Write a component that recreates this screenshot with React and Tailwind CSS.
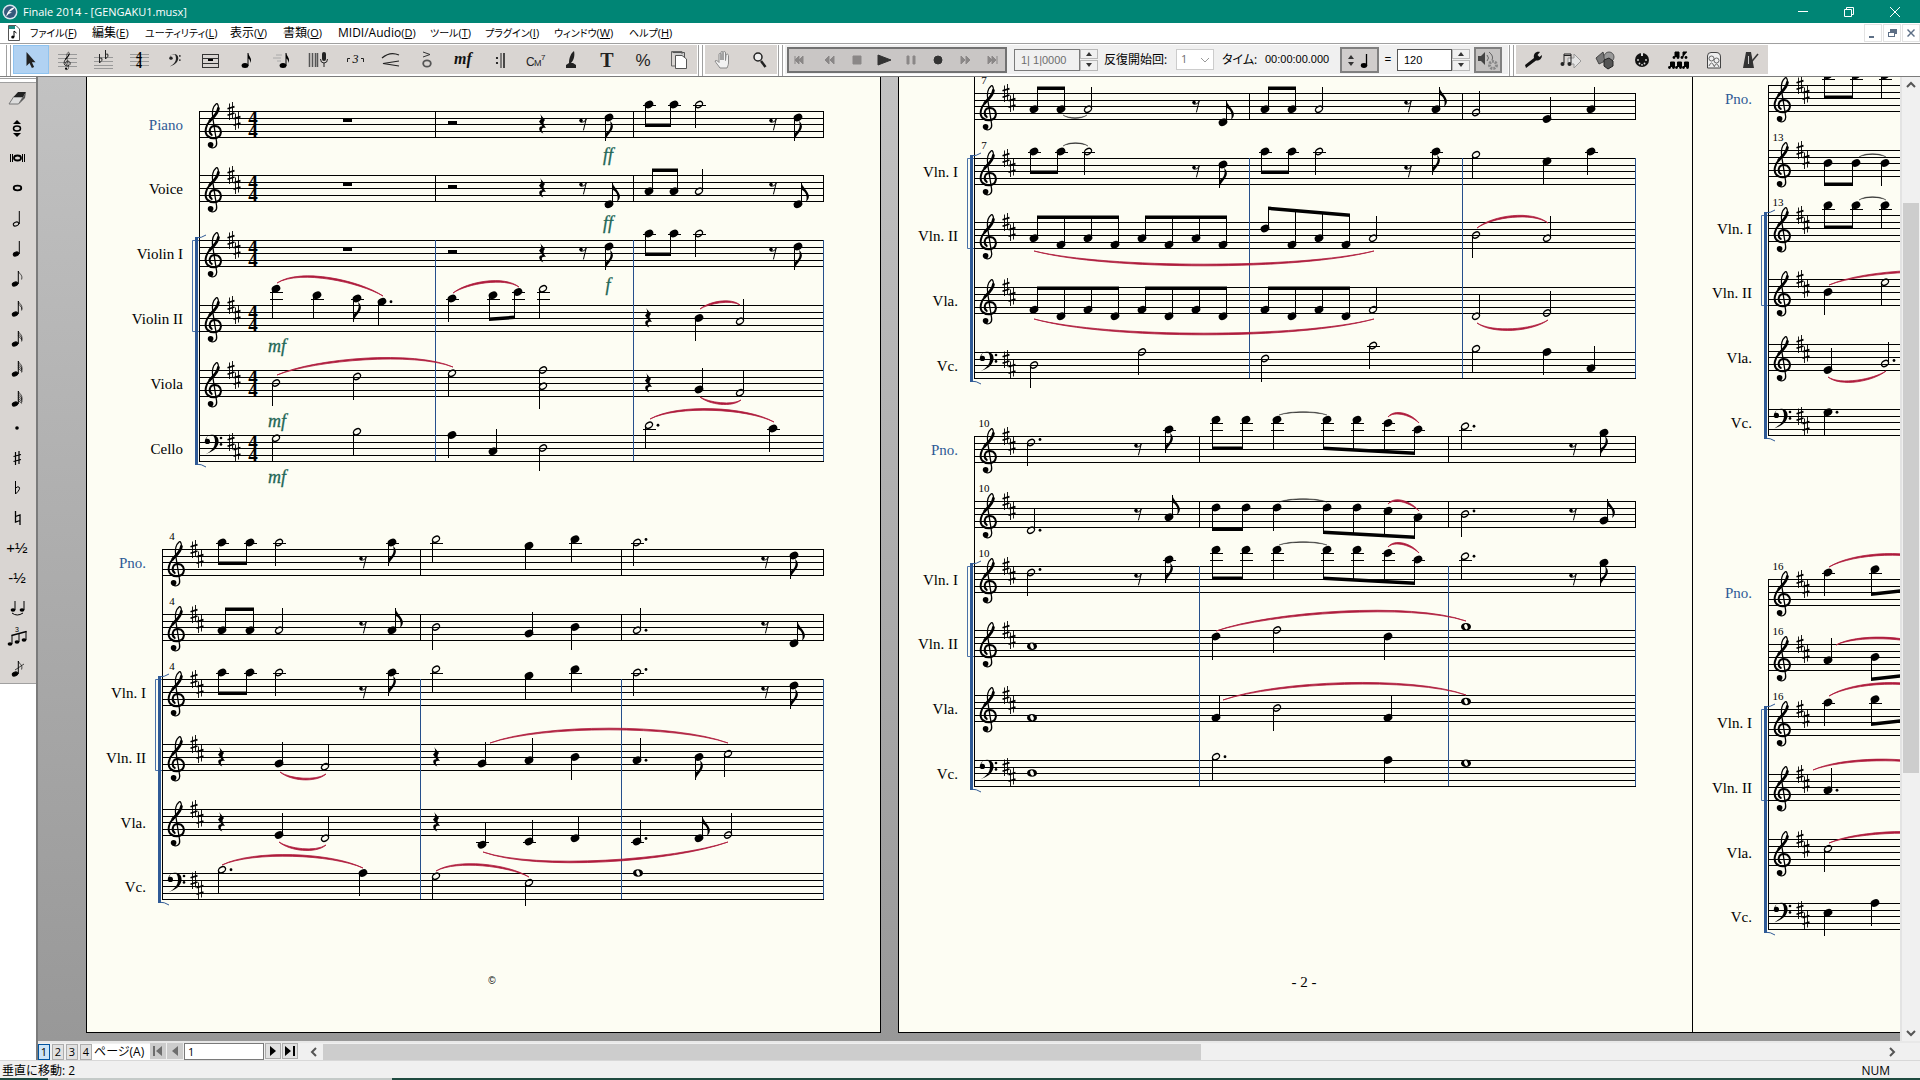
import React, { useState } from 'react';

const STAFF_LINES = [0, 7, 13, 20, 26];
const STEP = 3.25;

/* ---------- music symbols ---------- */

const TrebleClef = ({ x, y, s = 1 }) => (
  <g transform={`translate(${x} ${y}) scale(${s})`} fill="none" stroke="black" strokeLinecap="round">
    <path d="M-1.2 4C-5 1.4 -3.4 -5 1.5 -5C7.2 -5 9 0 7.3 3.8C5.2 8.2 -2.4 8.2 -5.6 4.8C-9.2 0.6 -6.8 -6.2 -2.6 -10.6" strokeWidth="2" />
    <path d="M-3.2 -10C1 -14.4 5 -18 5.4 -22.6" strokeWidth="2.8" />
    <path d="M5.4 -22C5.8 -26 4.2 -28.4 2.8 -26.8C-0.6 -24 -1 -18 -0.2 -13L3.6 11C4.4 16.2 0 18 -3 16" strokeWidth="1.3" />
    <circle cx="-2.4" cy="13.8" r="2.8" fill="black" stroke="none" />
  </g>
);

const BassClef = ({ x, y, s = 1 }) => (
  <g transform={`translate(${x} ${y}) scale(${s})`}>
    <circle cx="-4.6" cy="6.4" r="2.6" />
    <path d="M-6.8 6C-6.4 -2 6.8 -2.6 6.6 6.6C6.2 13.6 0 17 -6.6 19.4C-1 16 3 12.6 3 6.4C3 1 0.4 -0.6 -2 0C-4.4 0.6 -5.6 2.6 -5.8 5Z" />
    <circle cx="9" cy="3" r="1.3" />
    <circle cx="9" cy="9.4" r="1.3" />
  </g>
);

const Sharp = ({ x, y }) => (
  <g transform={`translate(${x} ${y})`} stroke="black" fill="none">
    <path d="M-1.5 -7.5V9M1.5 -9V7.5" strokeWidth="0.9" />
    <path d="M-3.5 -2.2L3.5 -4.4M-3.5 4.2L3.5 2" strokeWidth="1.7" />
  </g>
);

const Head = ({ x, y, type }) => {
  if (type === 'w') {
    return (
      <g transform={`translate(${x} ${y})`}>
        <ellipse rx="5" ry="3.8" />
        <ellipse rx="1.7" ry="2.7" fill="#fdfdf3" transform="rotate(-20)" />
      </g>
    );
  }
  if (type === 'h') {
    return <ellipse rx="3.8" ry="2.7" fill="none" stroke="black" strokeWidth="1.4" transform={`translate(${x} ${y}) rotate(-30)`} />;
  }
  return <ellipse rx="4.5" ry="3.5" transform={`translate(${x} ${y}) rotate(-25)`} />;
};

const Flag = ({ x, y, up }) => (
  <path d="M0 0C0.5 5 7.4 9 7.4 14C7.4 16.4 6 18.4 4.5 19.4C6.4 14 4 9 0 7.5Z" transform={`translate(${x} ${y}) scale(1 ${up ? 1 : -1})`} />
);

const QuarterRest = ({ x, y }) => (
  <path d="M-2 -10L3 -4C1 -2 1 0 4 4C0 2.8 -1.6 5 1.4 9.6C-4 7.4 -4 1.4 0.4 2.2L-3 -2.6C-0.4 -5 -0.2 -7 -2 -10Z" transform={`translate(${x} ${y})`} />
);

const EighthRest = ({ x, y }) => (
  <g transform={`translate(${x} ${y})`}>
    <circle cx="-2" cy="-3.4" r="1.8" />
    <path d="M-2.4 -2C0 -1.4 2 -2.4 3.2 -5L0.4 6.4" fill="none" stroke="black" />
  </g>
);

const Ledgers = ({ x, top, pos }) => {
  const lines = [];
  for (let p = -2; p >= pos; p -= 2) lines.push(p);
  for (let p = 10; p <= pos; p += 2) lines.push(p);
  return lines.map((p) => (
    <rect key={p} x={x - 6} y={Math.round(top + p * STEP)} width="13" height="1" />
  ));
};

const Note = ({ top, type, x, pos, dir, dot }) => {
  const y = top + pos * STEP;
  const up = dir === 'u';
  const stemX = up ? x + 3 : x - 4;
  const end = up ? Math.min(y - 22, top + 13) : Math.max(y + 23, top + 13);
  return (
    <g>
      <Ledgers x={x} top={top} pos={pos} />
      <Head x={x} y={y} type={type} />
      {dir && <rect x={stemX} y={Math.round(Math.min(y, end))} width="1" height={Math.round(Math.abs(end - y))} />}
      {type === 'e' && <Flag x={stemX + 0.5} y={end} up={up} />}
      {dot && <circle cx={x + 9} cy={pos % 2 === 0 ? y - 3 : y} r="1.4" />}
    </g>
  );
};

const Beam = ({ top, token }) => {
  const [dir, ys, heads] = token.slice(1).split('|');
  const [b1, b2] = ys.split(',').map(Number);
  const notes = heads.split(',').map((n) => n.split(':').map(Number));
  const off = dir === 'u' ? 3 : -4;
  const xa = notes[0][0] + off;
  const xb = notes[notes.length - 1][0] + off;
  const beamY = (x) => top + b1 + ((b2 - b1) * (x - xa)) / (xb - xa);
  return (
    <g>
      {notes.map(([x, pos]) => {
        const y = top + pos * STEP;
        const by = beamY(x + off);
        return (
          <g key={x}>
            <Ledgers x={x} top={top} pos={pos} />
            <Head x={x} y={y} />
            <rect x={x + off} y={Math.min(y, by)} width="1" height={Math.abs(by - y)} />
          </g>
        );
      })}
      <polygon points={`${xa},${beamY(xa) - 1.5} ${xb + 1},${beamY(xb) - 1.5} ${xb + 1},${beamY(xb) + 2} ${xa},${beamY(xa) + 2}`} />
    </g>
  );
};

const Token = ({ top, token }) => {
  if (token[0] === 'b') return <Beam top={top} token={token} />;
  const rest = token.match(/^([WHRE])(\d+)$/);
  if (rest) {
    const x = Number(rest[2]);
    if (rest[1] === 'W') return <rect x={x - 4} y={top + 7} width="9" height="4" />;
    if (rest[1] === 'H') return <rect x={x - 4} y={top + 10} width="9" height="4" />;
    if (rest[1] === 'R') return <QuarterRest x={x} y={top + 13} />;
    return <EighthRest x={x} y={top + 13} />;
  }
  const [, type, x, pos, dir, dot] = token.match(/^([whqe])(\d+):(-?\d+)([ud]?)(\.?)$/);
  return <Note top={top} type={type} x={Number(x)} pos={Number(pos)} dir={dir} dot={dot} />;
};

const Slur = ({ d: [x1, y1, x2, y2, h, tie] }) => {
  const k = (h * 4) / 3;
  const t = tie ? 0.5 : 1.1;
  const s = h < 0 ? -1 : 1;
  const xa = x1 + (x2 - x1) * 0.22;
  const xb = x2 - (x2 - x1) * 0.22;
  return (
    <path
      d={`M${x1} ${y1}C${xa} ${y1 + k + s * t} ${xb} ${y2 + k + s * t} ${x2} ${y2}C${xb} ${y2 + k - s * t} ${xa} ${y1 + k - s * t} ${x1} ${y1}Z`}
      fill={tie ? '#222' : '#ae1c3c'}
      stroke={tie ? '#222' : '#ae1c3c'}
      strokeWidth={tie ? '0.4' : '0.8'}
    />
  );
};

const System = ({ left, right, bars, staves, slurs, first, number, clipTop }) => {
  const group = staves.filter((s) => s.bracket);
  const gTop = group[0].top;
  const gBottom = group[group.length - 1].top + 26;
  const thinBottom = group[1].top + 26;
  return (
    <g fill="black">
      {staves.map((s) => (
        <g key={s.top}>
          {STAFF_LINES.map((l) => (
            <rect key={l} x={left} y={s.top + l} width={right - left + 1} height="1" />
          ))}
          {s.bass ? <BassClef x={left + 13} y={s.top} /> : <TrebleClef x={left + 14} y={s.top + 20} />}
          <Sharp x={left + 32} y={s.top + (s.bass ? 7 : 0)} />
          <Sharp x={left + 38} y={s.top + (s.bass ? 17 : 10)} />
          {first && (
            <g fontFamily="Liberation Serif, serif" fontWeight="bold" fontSize="19" textAnchor="middle">
              <text x={left + 54} y={s.top + 13}>4</text>
              <text x={left + 54} y={s.top + 26}>4</text>
            </g>
          )}
          {number && s.num && (
            <text x={left + 10} y={s.top - 9} fontFamily="Liberation Serif, serif" fontSize="11" textAnchor="middle">{number}</text>
          )}
          {s.label && (
            <text x={left - 16} y={s.top + 19} fontFamily="Liberation Serif, serif" fontSize="15" textAnchor="end" fill={s.blue ? '#2f5a96' : 'black'}>
              {s.label}
            </text>
          )}
          {!s.bracket && [...bars, right].map((b) => <rect key={b} x={b} y={s.top} width="1" height="26" />)}
          {s.notes.split(' ').map((t) => <Token key={t} top={s.top} token={t} />)}
        </g>
      ))}
      <rect x={left} y={clipTop || staves[0].top} width="1" height={gBottom - (clipTop || staves[0].top) + 1} />
      {[...bars, right].map((b) => (
        <rect key={b} x={b} y={gTop} width="1" height={gBottom - gTop} fill="#26508c" />
      ))}
      <path d={`M${left} ${gTop + 0.5}H${left - 6.5}V${thinBottom + 0.5}H${left}`} fill="none" stroke="#4a72a8" />
      <rect x={left - 4} y={gTop - 3} width="3" height={gBottom - gTop + 7} fill="#2f5a96" />
      <path d={`M${left - 4} ${gTop - 2}Q${left + 3} ${gTop - 2} ${left + 7} ${gTop - 5}`} fill="none" stroke="#2f5a96" />
      <path d={`M${left - 4} ${gBottom + 3}Q${left + 3} ${gBottom + 3} ${left + 7} ${gBottom + 6}`} fill="none" stroke="#2f5a96" />
      {slurs.map((d) => <Slur key={d.join()} d={d} />)}
    </g>
  );
};

/* ---------- score data ----------
   q276:-5d  = quarter head at x 276, five steps over the top line, stem down
   W H R E   = whole, half, quarter and eighth rest
   bd|y1,y2| = beamed group, stems down, beam from y1 to y2 */

const P1A = 'W347 H452 R542 E583 e609:2d bd|14,14|649:-2,674:-2 h699:-2d E773 e798:2d';
const P1B = 'bd|14,14|222:-2,250:-2 h279:-2d E363 e392:-2d h436:-3d q529:-1d q575:-3d h637:-2d. E765 e794:2d';
const P2B = 'h1031:2d. E1138 e1169:-2d bd|12,12|1216:-5,1246:-5 q1277:-5d bd|12,17|1327:-5,1357:-5,1388:-4,1418:-2 h1465:-3d. E1573 e1604:-1d';
const P3A = 'bd|12,12|1828:-3,1856:-3 q1885:-3d';
const P3B = 'q1828:-2d bd|15,10|1875:-3,1920:-4';

const page1 = [
  {
    left: 199, right: 823, bars: [435, 633], first: true,
    staves: [
      { top: 111, label: 'Piano', blue: true, notes: P1A },
      { top: 175, label: 'Voice', notes: 'W347 H452 R542 E583 e609:9u bu|-5,-5|649:5,674:5 h699:5u E773 e798:9u' },
      { top: 240, label: 'Violin I', bracket: true, notes: P1A },
      { top: 305, label: 'Violin II', bracket: true, notes: 'q276:-5d q317:-3d e357:-2d q382:-1d. q452:-2d bd|14,12|493:-3,518:-4 h543:-5d R648 q699:4d h740:5u' },
      { top: 370, label: 'Viola', bracket: true, notes: 'h276:4d h357:2d h452:1d h543:0d h543:5d R648 q699:6u h740:7u' },
      { top: 435, label: 'Cello', bracket: true, bass: true, notes: 'h276:1d h357:-1d q452:0d q493:5u h543:4d h649:-3d. q773:-2d' },
    ],
    slurs: [[277, 283, 383, 296, -11], [453, 293, 519, 287, -8], [700, 309, 740, 305, -5], [277, 375, 453, 367, -12], [700, 397, 741, 400, 5], [650, 419, 774, 422, -11]],
  },
  {
    left: 162, right: 823, bars: [420, 621], number: 4,
    staves: [
      { top: 549, label: 'Pno.', blue: true, num: true, notes: P1B },
      { top: 614, num: true, notes: 'bu|-5,-5|222:5,250:5 h279:5u E363 e392:5u h436:4d q529:6u q575:4d h637:5u. E765 e794:9u' },
      { top: 679, label: 'Vln. I', num: true, bracket: true, notes: P1B },
      { top: 744, label: 'Vln. II', bracket: true, notes: 'R221 q279:6u h325:7u R436 q482:6u q529:5u q575:4d q637:5u. e699:4d h728:3d' },
      { top: 809, label: 'Vla.', bracket: true, notes: 'R221 q279:8u h325:9u R436 q482:11u q529:10u q575:9u q637:10u. e699:9u h728:8u' },
      { top: 873, label: 'Vc.', bracket: true, bass: true, notes: 'h222:-1d. q363:0d h436:1d h529:3d w638:0' },
    ],
    slurs: [[280, 772, 326, 774, 6], [490, 743, 728, 743, -14], [279, 842, 326, 845, 6], [483, 852, 728, 842, 14], [222, 865, 363, 868, -11], [436, 871, 529, 877, -9]],
  },
];

const VLN2 = 'bu|-5,-5|1034:5,1061:7,1088:5,1115:7 bu|-5,-5|1142:5,1169:7,1196:5,1223:7 bu|-14,-7|1265:2,1292:7,1319:5,1346:7 h1373:5u h1476:4d h1547:5u';
const VLA = 'bu|1,1|1034:7,1061:9,1088:7,1115:9 bu|1,1|1142:7,1169:9,1196:7,1223:9 bu|1,1|1265:7,1292:9,1319:7,1346:9 h1373:7u h1476:9u h1547:8u';

const page2 = [
  {
    left: 974, right: 1635, bars: [1249, 1462], number: 7, clipTop: 77,
    staves: [
      { top: 93, num: true, notes: 'bu|-5,-5|1034:5,1061:5 h1088:5u E1196 e1223:9u bu|-5,-5|1265:5,1292:5 h1319:5u E1408 e1436:5u h1476:6u q1547:8u q1591:5u' },
      { top: 158, label: 'Vln. I', num: true, bracket: true, notes: 'bd|14,14|1034:-2,1061:-2 h1088:-2d E1196 e1223:2d bd|14,14|1265:-2,1292:-2 h1319:-2d E1408 e1436:-2d h1476:-1d q1547:1d q1591:-2d' },
      { top: 222, label: 'Vln. II', bracket: true, notes: VLN2 },
      { top: 287, label: 'Vla.', bracket: true, notes: VLA },
      { top: 352, label: 'Vc.', bracket: true, bass: true, notes: 'h1034:4d h1142:0d h1265:2d h1373:-2d h1476:-1d q1547:0d q1591:5u' },
    ],
    slurs: [[1063, 115, 1087, 115, 3, 1], [1063, 146, 1088, 146, -3, 1], [1034, 251, 1374, 251, 14], [1477, 228, 1548, 223, -9], [1034, 319, 1374, 319, 15], [1477, 323, 1548, 320, 8]],
  },
  {
    left: 974, right: 1635, bars: [1199, 1448], number: 10,
    staves: [
      { top: 436, label: 'Pno.', blue: true, num: true, notes: P2B },
      { top: 501, num: true, notes: 'h1031:9u. E1138 e1169:5u bd|28,28|1216:2,1246:2 q1277:2d bd|31,36|1327:2,1357:2,1388:3,1418:5 h1465:4d. E1573 e1604:6u' },
      { top: 566, label: 'Vln. I', num: true, bracket: true, notes: P2B },
      { top: 630, label: 'Vln. II', bracket: true, notes: 'w1032:5 q1216:2d h1277:0d q1388:2d w1466:-1' },
      { top: 695, label: 'Vla.', bracket: true, notes: 'w1032:7 q1216:7u h1277:4d q1388:7u w1466:2' },
      { top: 760, label: 'Vc.', bracket: true, bass: true, notes: 'w1032:4 h1216:-1d. q1388:0d w1466:1' },
    ],
    slurs: [[1279, 415, 1327, 415, -3, 1], [1279, 502, 1327, 502, -3, 1], [1279, 545, 1327, 545, -3, 1], [1388, 417, 1419, 423, -6], [1388, 504, 1419, 511, -6], [1388, 547, 1419, 553, -6], [1216, 631, 1466, 621, -14], [1223, 700, 1466, 695, -14]],
  },
];

const page3 = [
  {
    left: 1768, right: 2480, bars: [1990], number: 13,
    staves: [
      { top: 85, label: 'Pno.', blue: true, notes: P3A },
      { top: 150, num: true, notes: 'bd|34,34|1828:4,1856:4 q1885:4d' },
      { top: 215, label: 'Vln. I', num: true, bracket: true, notes: P3A },
      { top: 279, label: 'Vln. II', bracket: true, notes: 'q1828:4d h1885:1d' },
      { top: 344, label: 'Vla.', bracket: true, notes: 'q1828:8u h1885:6u.' },
      { top: 409, label: 'Vc.', bracket: true, bass: true, notes: 'q1828:1d.' },
    ],
    slurs: [[1859, 157, 1886, 157, -3, 1], [1859, 200, 1886, 200, -3, 1], [1829, 285, 1990, 280, -11], [1828, 377, 1886, 371, 7]],
  },
  {
    left: 1768, right: 2480, bars: [1990], number: 16,
    staves: [
      { top: 579, label: 'Pno.', blue: true, num: true, notes: P3B },
      { top: 644, num: true, notes: 'q1828:5u bd|35,30|1875:4,1920:3' },
      { top: 709, label: 'Vln. I', num: true, bracket: true, notes: P3B },
      { top: 774, label: 'Vln. II', bracket: true, notes: 'q1828:5u.' },
      { top: 839, label: 'Vla.', bracket: true, notes: 'h1828:3d' },
      { top: 903, label: 'Vc.', bracket: true, bass: true, notes: 'q1828:3d q1875:0d' },
    ],
    slurs: [[1829, 567, 1940, 564, -11], [1836, 645, 1930, 647, -8], [1829, 696, 1940, 693, -11], [1813, 770, 1940, 768, -9], [1829, 843, 1960, 840, -9]],
  },
];

const dynamics = [['ff', 608, 161], ['ff', 608, 229], ['f', 608, 291], ['mf', 277, 352], ['mf', 277, 427], ['mf', 277, 483]];

/* ---------- small icons ---------- */

const Icon = ({ children, size = 'size-7', box = '0 0 28 28' }) => (
  <svg className={size} viewBox={box} fill="none" stroke="none">{children}</svg>
);
const grayLines = (ys) => ys.map((y) => <path key={y} d={`M5 ${y + 0.5}H24`} stroke="#999" />);

const MiniNote = ({ x = 14, flags = 0, half }) => (
  <g stroke="black">
    <ellipse cx={x - 3} cy="20" rx="2.8" ry="1.9" fill={half ? 'none' : 'black'} transform={`rotate(-20 ${x - 3} 20)`} />
    <path d={`M${x + 0.3} 20V7`} />
    {Array.from({ length: flags }, (_, i) => (
      <path key={i} d={`M${x + 0.3} ${7 + i * 2.2}C${x + 1} ${10 + i * 2.2} ${x + 5} ${10.5 + i * 2} ${x + 3.6} ${15.5 + i}`} fill="none" strokeWidth="0.7" />
    ))}
  </g>
);

const mainTools = [
  ['Selection', <path d="M9.500 6V20L12.500 17L14.900 22L17.100 21L14.900 16.200H18.500Z" fill="#222" />],
  ['Staff', <>{grayLines([8, 12, 16, 20])}<TrebleClef x={14} y={17} s={0.4} /></>],
  ['Key Signature', <>{grayLines([11, 15, 19, 22])}<path d="M10.500 8V17Q14 14 13 12.500Q11.500 11 10.500 13M16.500 4V13Q20 10 19 8.500Q17.500 7 16.500 9" stroke="#222" /></>],
  ['Time Signature', <>{grayLines([8, 11, 15, 19])}<g fill="black" fontFamily="Liberation Serif, serif" fontWeight="bold" fontSize="12" textAnchor="middle"><text x="14" y="14">4</text><text x="14" y="22">4</text></g></>],
  ['Clef', <g fill="#222"><BassClef x={13} y={8} s={0.65} /></g>],
  ['Measure', <><path d="M5 8.500H22M5 12.500H22M5 17.500H22M5 21.500H22M5.500 8V22M21.500 8V22" stroke="#333" /><rect x="11" y="13" width="5" height="2" fill="black" /></>],
  ['Simple Entry', <g fill="black"><ellipse cx="12" cy="19.500" rx="3.400" ry="2.500" /><path d="M14.500 20V7H15.500C15.500 11 20 12 17 17C17.500 14 16 13 15.500 12.500V20Z" /></g>],
  ['Speedy Entry', <g fill="black"><path d="M7 9H13M4 12H12M8 15H12" stroke="#aaa" /><ellipse cx="14" cy="19.500" rx="3.400" ry="2.500" /><path d="M16.500 20V7H17.500C17.500 11 22 12 19 17C19.500 14 18 13 17.500 12.500V20Z" /></g>],
  ['HyperScribe', <><path d="M4.500 7V21M7.500 7V21M10.500 7V21M12.500 7V21" stroke="#555" strokeWidth="1.500" /><rect x="17" y="6" width="4" height="9" rx="2" fill="#222" /><path d="M15.500 13Q15.500 17 19 17Q22.500 17 22.500 13M19 17V21" stroke="#222" /></>],
  ['Tuplet', <><path d="M6.500 16V12.500H9M22.500 16V12.500H20" stroke="#222" /><text x="14.500" y="17" fill="black" fontFamily="Liberation Serif, serif" fontStyle="italic" fontSize="12" textAnchor="middle">3</text></>],
  ['Smart Shape', <path d="M5 12Q13 5 22 9M22 15L6 17.500L22 20" stroke="#222" strokeWidth="1.200" />],
  ['Articulation', <><path d="M10 6L17 8.500L10 11" stroke="#333" /><ellipse cx="14" cy="17.500" rx="3.800" ry="3.200" stroke="#555" strokeWidth="1.800" /></>],
  ['Expression', <text x="14" y="18" fill="#111" fontFamily="Liberation Serif, serif" fontWeight="bold" fontStyle="italic" fontSize="16" textAnchor="middle">mf</text>],
  ['Repeat', <><path d="M16 7V22" stroke="#222" /><path d="M19 7V22" stroke="#222" strokeWidth="1.600" /><circle cx="12" cy="12" r="1.100" fill="black" /><circle cx="12" cy="17" r="1.100" fill="black" /></>],
  ['Chord', <g fill="#222" fontFamily="Liberation Sans, sans-serif"><text x="5" y="20" fontSize="12">C</text><text x="13" y="20" fontSize="9">M</text><text x="20" y="14" fontSize="8">7</text></g>],
  ['Lyrics', <path d="M9 22H19V19L16 17H12L9 19ZM12 17C12 12 14 7 17 5C18 9 17 14 14 17Z" fill="#222" />],
  ['Text', <text x="14" y="21" fill="#222" fontFamily="Liberation Serif, serif" fontWeight="bold" fontSize="20" textAnchor="middle">T</text>],
  ['Resize', <text x="14" y="20" fill="#222" fontFamily="Liberation Sans, sans-serif" fontSize="17" textAnchor="middle">%</text>],
  ['Page Layout', <><path d="M7.500 6.500H19.500V18.500" fill="#ccc" stroke="#555" /><path d="M10.500 9.500H17L21.500 13V22.500H10.500Z" fill="white" stroke="#555" /><path d="M6.500 5.500H17V8M6.500 5.500V20H10" stroke="#666" /></>],
];

const navTools = [
  ['Hand Grabber', <path d="M11 22C9 19 7 17 6 15C7 14 8.500 14.500 10 16.500V8.500C10 7 12 7 12 8.500V14V6.500C12 5 14 5 14 6.500V14V6.500C14.500 5 16.500 5 16.500 7V14.500L17 9C17.500 7.500 19.500 8 19.500 9.500V17C19.500 19 18.500 20.500 18 22Z" fill="#f2f2f2" stroke="#888" />],
  ['Zoom', <><circle cx="13" cy="11" r="4" fill="#eee" stroke="#222" strokeWidth="1.500" /><path d="M16 15L20.500 21" stroke="#222" strokeWidth="2.500" /></>],
];

const advTools = [
  ['Special Tools', <path d="M6 22L5 19L14 12C13 8 16 5 20 6L17.500 9L19.500 11L22 9C22 13 19 15 16 14.500Z" fill="#111" />],
  ['Note Mover', <><path d="M12 12H18V8L25 15L18 22V18H12Z" fill="#e4e4e4" stroke="#999" /><path d="M8 17V8H15V17M8 9.500H15" stroke="#222" /><circle cx="6.500" cy="18" r="2" fill="#222" /><circle cx="13.500" cy="18" r="2" fill="#222" /></>],
  ['Graphics', <><path d="M4 12L11 6L13 15L7 18Z" fill="#777" stroke="#444" /><circle cx="17" cy="11" r="5" fill="#999" stroke="#555" /><path d="M12 14L17 12L21 15V20L16 23L12 20Z" fill="#555" stroke="#222" /></>],
  ['MIDI', <><circle cx="14" cy="14" r="7" fill="#111" /><g fill="#ddd"><circle cx="10" cy="14" r="0.900" /><circle cx="18" cy="14" r="0.900" /><circle cx="11.500" cy="17.500" r="0.900" /><circle cx="16.500" cy="17.500" r="0.900" /><circle cx="14" cy="18.800" r="0.900" /><rect x="13" y="7" width="2" height="3" /></g></>],
  ['Ossia', <g fill="black"><path d="M11 11V6H15V11M19 11V6H23M6.500 21V16H10.500V21M13.500 21V16H17.500V21M20.500 21V16H24.500V21" stroke="black" /><circle cx="10" cy="11.500" r="1.400" /><circle cx="14" cy="11.500" r="1.400" /><circle cx="18" cy="11.500" r="1.400" /><circle cx="22" cy="11.500" r="1.400" /><circle cx="5.500" cy="21.500" r="1.400" /><circle cx="9.500" cy="21.500" r="1.400" /><circle cx="12.500" cy="21.500" r="1.400" /><circle cx="16.500" cy="21.500" r="1.400" /><circle cx="19.500" cy="21.500" r="1.400" /><circle cx="23.500" cy="21.500" r="1.400" /></g>],
  ['Mirror', <><path d="M7.500 22V10Q7.500 6.500 11 6.500H16Q20.500 6.500 20.500 11V22Z" fill="#eee" stroke="#444" /><circle cx="11.500" cy="12.500" r="2.500" stroke="#666" /><circle cx="16.500" cy="14.500" r="2.500" stroke="#666" /><path d="M9 20Q11.500 14 14 20M14 21Q16.500 15 19 21" stroke="#666" /></>],
  ['Tempo', <><path d="M10 6H15L18 22H7Z" fill="#333" /><path d="M12 20L22 8" stroke="#333" strokeWidth="1.500" /><path d="M12.500 10V18" stroke="#ccc" /></>],
];

const Quarter = ({ x, y }) => (
  <g><ellipse cx={x} cy={y} rx="2.4" ry="1.8" fill="black" /><path d={`M${x + 2} ${y}V${y - 9}`} stroke="black" /></g>
);

const sideTools = [
  ['Eraser', <><path d="M6 20L10.500 13H20L15.500 20Z" fill="#ddd" stroke="#777" /><path d="M10.500 13L15 8H23L20 13Z" fill="#222" /><path d="M20 13L23 8L22 14L16 20Z" fill="#555" /></>],
  ['Repitch', <g fill="black"><path d="M10 10L14 6L18 10ZM10 19L14 23L18 19Z" /><ellipse cx="14" cy="14.500" rx="3.500" ry="2.500" stroke="black" strokeWidth="1.500" fill="none" /></g>],
  ['Double Whole Note', <><path d="M7.500 10V18M9.500 10V18M19.500 10V18M21.500 10V18" stroke="black" /><ellipse cx="14.500" cy="14" rx="3.500" ry="2.500" stroke="black" strokeWidth="1.800" /></>],
  ['Whole Note', <ellipse cx="14.500" cy="14" rx="3.800" ry="2.300" stroke="black" strokeWidth="1.800" />],
  ['Half Note', <MiniNote x={16} half />],
  ['Quarter Note', <MiniNote x={16} />],
  ['Eighth Note', <MiniNote x={15} flags={1} />],
  ['16th Note', <MiniNote x={15} flags={2} />],
  ['32nd Note', <MiniNote x={15} flags={3} />],
  ['64th Note', <MiniNote x={15} flags={4} />],
  ['128th Note', <MiniNote x={15} flags={5} />],
  ['Dot', <circle cx="14" cy="14" r="1.800" fill="black" />],
  ['Sharp', <path d="M12.500 8V21M16 7V20M10.500 12.500L18 10.500M10.500 17.500L18 15.500" stroke="black" strokeWidth="1.200" />],
  ['Flat', <path d="M12.500 7V20Q18 15 16 13Q14 12 12.500 14.500" stroke="black" />],
  ['Natural', <path d="M12.500 7V18L17 16.500M17 21V11L12.500 12.500" stroke="black" strokeWidth="1.300" />],
  ['Half Step Up', '+½'],
  ['Half Step Down', '-½'],
  ['Tie', <><Quarter x={10} y={16} /><Quarter x={19} y={16} /><path d="M9 19Q14 23 20 19" stroke="black" /></>],
  ['Tuplet Entry', <><Quarter x={7} y={20} /><Quarter x={14} y={18} /><Quarter x={21} y={16} /><path d="M8.500 11.500L23.500 7.500" stroke="black" strokeWidth="1.600" /><text x="12" y="8" fontFamily="Liberation Sans, sans-serif" fontSize="7" fill="black">3</text></>],
  ['Grace Note', <><MiniNote x={15} flags={1} /><path d="M12 16L21 10" stroke="black" strokeWidth="0.700" /></>],
];

const menus = [
  ['ファイル', 'F', 'w-[62px]'], ['編集', 'E', 'w-[53px]'], ['ユーティリティ', 'L', 'w-[85px]'], ['表示', 'V', 'w-[53px]'], ['書類', 'O', 'w-[55px]'],
  ['MIDI/Audio', 'D', 'w-[92px]'], ['ツール', 'T', 'w-[55px]'], ['プラグイン', 'I', 'w-[69px]'], ['ウィンドウ', 'W', 'w-[75px]'], ['ヘルプ', 'H', 'w-[60px]'],
];

const isKana = (name) => name.charCodeAt(0) > 0x3000 && name.charCodeAt(0) < 0x3100;

const playback = [
  ['Rewind to start', 'M4 8V16M12 8L8 12L12 16ZM8 8L4 12L8 16Z', '#8a8787'],
  ['Rewind', 'M16 8L12 12L16 16ZM11 8L7 12L11 16Z', '#8a8787'],
  ['Stop', 'M8 8H16V16H8Z', '#8a8787'],
  ['Play', 'M6 7L19 12L6 17Z', '#333'],
  ['Pause', 'M8 8H10V16H8ZM14 8H16V16H14Z', '#8a8787'],
  ['Record', 'M12 8A4 4 0 1 1 12 16A4 4 0 1 1 12 8Z', '#333'],
  ['Forward', 'M8 8L12 12L8 16ZM13 8L17 12L13 16Z', '#8a8787'],
  ['Forward to end', 'M8 8L12 12L8 16ZM12 8L16 12L12 16ZM17 8V16', '#8a8787'],
];

const Grip = () => (
  <div className="flex h-full w-2 shrink-0 gap-px bg-white px-px">
    <div className="h-full w-px bg-[#a0a0a0]" />
    <div className="h-full w-px bg-white" />
    <div className="h-full w-px bg-[#a0a0a0]" />
  </div>
);

const ToolStrip = ({ tools, active, onPick }) => (
  <div className="flex h-[29px] shrink-0 bg-[#d9d5d2]">
    {tools.map(([name, art]) => (
      <button
        key={name}
        aria-label={name}
        onClick={() => onPick(name)}
        className={active === name
          ? 'flex w-9 items-center justify-center border border-[#8fc3ef] bg-[#b1d2f2]'
          : 'flex w-9 items-center justify-center border border-transparent'}
      >
        <Icon>{art}</Icon>
      </button>
    ))}
  </div>
);

const Spinner = () => (
  <div className="flex h-[22px] w-[18px] shrink-0 flex-col gap-px">
    <button aria-label="Up" className="flex flex-1 items-center justify-center border border-[#b8b8b8] bg-[#f0f0f0]">
      <svg className="h-1 w-2" viewBox="0 0 8 4"><path d="M1 4L4 0L7 4Z" fill="#333" /></svg>
    </button>
    <button aria-label="Down" className="flex flex-1 items-center justify-center border border-[#b8b8b8] bg-[#f0f0f0]">
      <svg className="h-1 w-2" viewBox="0 0 8 4"><path d="M1 0L4 4L7 0Z" fill="#333" /></svg>
    </button>
  </div>
);

const Page = ({ x, systems, children, className, label }) => (
  <section aria-label={label} className={`h-[956px] w-[795px] shrink-0 border-black bg-[#fdfdf3] ${className}`}>
    <svg className="block h-[955px] w-[793px]" viewBox={`${x} 77 793 955`}>
      {systems.map((s) => <System key={s.number || 1} {...s} />)}
      {children}
    </svg>
  </section>
);

const NavButton = ({ label, d, off }) => (
  <button aria-label={label} className={off ? 'flex h-4 w-4 items-center justify-center bg-[#cccccc]' : 'flex h-4 w-4 items-center justify-center border border-[#adadad] bg-[#e1e1e1]'}>
    <svg className="size-3 shrink-0" viewBox="0 0 12 12"><path d={d} fill={off ? '#6d6d6d' : 'black'} /></svg>
  </button>
);

export default function App() {
  const [tool, setTool] = useState('Selection');
  const [view, setView] = useState(1);

  return (
    <div className="flex h-screen flex-col overflow-hidden bg-white font-['Open_Sans','Noto_Sans_CJK_JP',sans-serif] text-xs text-black">
      {/* Title bar */}
      <header className="flex h-[23px] shrink-0 items-center bg-[#008575] pr-[2px] pl-[2px] text-white">
        <svg className="size-4" viewBox="0 0 16 16">
          <circle cx="8" cy="8" r="7.500" fill="#d8e4ee" />
          <circle cx="8" cy="8" r="6" fill="#35597c" />
          <path d="M4 13C5 8 8 4 13 3C11 6 9 7 7 8L10 8.500L6.500 10Z" fill="white" />
        </svg>
        <h1 className="ml-[5px] text-[11px] leading-none">Finale 2014 - [GENGAKU1.musx]</h1>
        <div className="ml-auto flex">
          <button aria-label="Minimize" className="flex h-[21px] w-[46px] items-center justify-center"><svg className="size-3" viewBox="0 0 12 12"><path d="M1 5.500H11" stroke="white" /></svg></button>
          <button aria-label="Restore" className="flex h-[21px] w-[46px] items-center justify-center"><svg className="size-3" viewBox="0 0 12 12"><path d="M1.500 3.500H8.500V10.500H1.500ZM3.500 3.500V1.500H10.500V8.500H8.500" stroke="white" fill="none" /></svg></button>
          <button aria-label="Close" className="flex h-[21px] w-[46px] items-center justify-center"><svg className="size-3" viewBox="0 0 12 12"><path d="M1 1L11 11M11 1L1 11" stroke="white" /></svg></button>
        </div>
      </header>

      {/* Menu bar */}
      <nav className="flex h-5 shrink-0 items-center bg-white">
        <svg className="mr-[10px] ml-2 h-4 w-3" viewBox="0 0 12 16">
          <path d="M0.500 0.500H8L11.500 4V15.500H0.500Z" fill="white" stroke="#555" />
          <path d="M1 1H7V4H1Z" fill="#1d8a80" />
          <path d="M6 12V6L8.500 8" stroke="black" fill="none" />
          <circle cx="4.800" cy="12" r="1.600" />
        </svg>
        {menus.map(([name, key, w]) => (
          <button key={name} className={`${w} text-left text-[11px] leading-5 whitespace-nowrap`}>
            <span className={isKana(name) ? "text-[10px] [font-feature-settings:'palt']" : 'text-xs'}>{name}</span>
            (<span className="underline">{key}</span>)
          </button>
        ))}
        <div className="ml-auto flex gap-px">
          {['M4 11H9V13H4Z', 'M6 4H13V9H11V12H4V7H6ZM5 8V11H10V8Z', 'M5 4L8 7L11 4L12 5L9 8L12 11L11 12L8 9L5 12L4 11L7 8L4 5Z'].map((d, i) => (
            <button key={d} aria-label={['Minimize document', 'Restore document', 'Close document'][i]} className="flex h-[18px] w-[18px] items-center justify-center border border-[#e3e3e3]">
              <svg className="size-4" viewBox="0 0 16 16"><path d={d} fill="#5d6f86" fillRule="evenodd" /></svg>
            </button>
          ))}
        </div>
      </nav>

      {/* Tool palettes */}
      <div className="flex h-[33px] shrink-0 items-start border-t border-[#a0a0a0] bg-white pt-px">
        <div className="w-[5px] shrink-0" />
        <Grip />
        <ToolStrip tools={mainTools} active={tool} onPick={setTool} />
        <Grip />
        <ToolStrip tools={navTools} active={tool} onPick={setTool} />
        <Grip />
        <div className="flex h-[29px] shrink-0 items-center bg-[#f0f0f0] pr-[6px] pl-[2px]">
          <div className="flex h-[26px] w-[220px] items-center justify-between border-2 border-[#727272] bg-[#c9c6c5] pr-px pl-[2px]">
            {playback.map(([name, d, c]) => (
              <button key={name} aria-label={name} className="flex size-6 items-center justify-center">
                <svg className="size-6 shrink-0" viewBox="0 0 24 24"><path d={d} fill={c} stroke={c} /></svg>
              </button>
            ))}
          </div>
          <input aria-label="Counter" defaultValue="1| 1|0000" className="ml-[7px] h-[22px] w-[66px] border border-[#7a7a7a] bg-[#f0f0f0] px-[6px] font-['Liberation_Sans',sans-serif] text-[11px] text-[#6d6d6d]" />
          <Spinner />
          <label htmlFor="pass" className="ml-[6px] w-[72px] text-xs whitespace-nowrap">反復開始回:</label>
          <div className="relative">
            <select id="pass" className="h-[21px] w-[38px] appearance-none border border-[#cccccc] bg-white pl-1 text-[11px] text-[#6d6d6d]"><option>1</option></select>
            <svg className="pointer-events-none absolute top-[7px] right-1 h-2 w-[10px]" viewBox="0 0 10 8"><path d="M1 2L5 6L9 2" stroke="#999" fill="none" /></svg>
          </div>
          <span className="ml-2 w-[43px] text-xs whitespace-nowrap [font-feature-settings:'palt']">タイム:</span>
          <output className="w-[75px] font-['Liberation_Sans',sans-serif] text-[11px]">00:00:00.000</output>
          <button aria-label="Beat unit" className="flex h-[26px] w-[39px] items-center justify-center border-2 border-[#808080] bg-[#d0cdcc]">
            <svg className="h-5 w-8 shrink-0" viewBox="0 0 32 20"><path d="M4 9L7 5L10 9ZM4 12L7 16L10 12Z" fill="#333" /><ellipse cx="20" cy="15.500" rx="3.200" ry="2.400" /><path d="M22.500 16V4" stroke="black" strokeWidth="1.300" /></svg>
          </button>
          <label htmlFor="tempo" className="w-[18px] text-center">=</label>
          <input id="tempo" defaultValue="120" className="h-[22px] w-[55px] border border-[#555] bg-white px-[6px] font-['Liberation_Sans',sans-serif] text-[11px]" />
          <Spinner />
          <button aria-label="Playback settings" className="ml-1 flex h-[26px] w-7 items-center justify-center border-2 border-[#808080] bg-[#c4c2c1]">
            <svg className="size-6 shrink-0" viewBox="0 0 24 24"><path d="M2 8H5L9 4V17L5 13H2Z" fill="#444" /><path d="M11 7Q14 10 11 13M13 4Q18 8 16 12" stroke="#666" fill="none" /><circle cx="17" cy="17" r="3.500" fill="none" stroke="#888" strokeWidth="3" strokeDasharray="2 1" /></svg>
          </button>
        </div>
        <Grip />
        <ToolStrip tools={advTools} active={tool} onPick={setTool} />
      </div>

      <div className="flex min-h-0 flex-1">
        {/* Simple entry palette */}
        <aside className="w-9 shrink-0 bg-white">
          <div className="flex h-[7px] flex-col gap-px border-t border-[#808080] pt-px">
            <div className="h-px bg-[#a0a0a0]" />
            <div className="h-px bg-white" />
            <div className="h-px bg-[#a0a0a0]" />
          </div>
          <div className="flex flex-col border-b border-[#a0a0a0] bg-[#d9d5d2]">
            {sideTools.map(([name, art]) => (
              <button key={name} aria-label={name} className="flex h-[30px] items-center justify-center pr-[2px] font-['Liberation_Sans',sans-serif] text-[15px]">
                {typeof art === 'string' ? art : <Icon>{art}</Icon>}
              </button>
            ))}
          </div>
        </aside>

        <main className="flex min-w-0 flex-1 flex-col border-t border-l-2 border-[#7b7b7b]">
          <div className="flex min-h-0 flex-1">
            <div className="flex min-w-0 flex-1 overflow-hidden bg-linear-to-b from-[#c2c2c2] to-[#989898] pl-12">
              <Page x={87} systems={page1} label="Page 1" className="mr-[17px] border-x border-b">
                {dynamics.map(([t, x, y]) => (
                  <text key={y} x={x} y={y} fill="#226655" stroke="#226655" strokeWidth="0.3" fontFamily="Liberation Serif, serif" fontStyle="italic" fontSize="18" textAnchor="middle">{t}</text>
                ))}
                <text x="492" y="984" fontFamily="Liberation Sans, sans-serif" fontSize="10" textAnchor="middle">©</text>
              </Page>
              <Page x={899} systems={page2} label="Page 2" className="border-x border-b">
                <text x="1304" y="987" fontFamily="Liberation Serif, serif" fontSize="15" textAnchor="middle">- 2 -</text>
              </Page>
              <Page x={1693} systems={page3} label="Page 3" className="border-r border-b" />
            </div>
            <div className="flex w-5 shrink-0 flex-col items-center border-l-2 border-[#e3e3e3] bg-[#f0f0f0] py-1">
              <svg className="h-2 w-3" viewBox="0 0 12 8"><path d="M2 6L6 2L10 6" stroke="#555" strokeWidth="2" fill="none" /></svg>
              <div className="mt-[114px] h-[570px] w-4 bg-[#cdcdcd]" />
              <svg className="mt-auto h-2 w-3" viewBox="0 0 12 8"><path d="M2 2L6 6L10 2" stroke="#555" strokeWidth="2" fill="none" /></svg>
            </div>
          </div>

          {/* Page navigation and horizontal scroll */}
          <div className="flex h-[19px] shrink-0 items-center border-t-2 border-[#e8e8e8] bg-[#f0f0f0]">
            <div className="flex gap-[2px]">
              {[1, 2, 3, 4].map((n) => (
                <button
                  key={n}
                  onClick={() => setView(n)}
                  className={view === n
                    ? 'h-4 w-3 border border-[#0054a0] bg-[#cce4f7] text-[11px] leading-[14px]'
                    : 'h-4 w-3 border border-[#adadad] bg-[#e1e1e1] text-[11px] leading-[14px]'}
                >
                  {n}
                </button>
              ))}
            </div>
            <label htmlFor="page" className="w-[58px] bg-white pl-[2px] text-xs leading-4 whitespace-nowrap [font-feature-settings:'palt']">ページ(A)</label>
            <div className="flex gap-px">
              <NavButton label="First page" off d="M1 1H3V11H1ZM10 1V11L4 6Z" />
              <NavButton label="Previous page" off d="M9 1V11L3 6Z" />
              <input id="page" defaultValue="1" className="h-[17px] w-20 border border-[#7a7a7a] bg-white px-[3px] text-[11px]" />
              <NavButton label="Next page" d="M3 1V11L9 6Z" />
              <NavButton label="Last page" d="M1 1V11L7 6ZM9 1H11V11H9Z" />
            </div>
            <svg className="mr-px ml-2 h-3 w-4 shrink-0" viewBox="0 0 16 12"><path d="M10 2L6 6L10 10" stroke="#555" strokeWidth="2" fill="none" /></svg>
            <div className="h-4 w-[878px] bg-[#cdcdcd]" />
            <svg className="mr-5 ml-auto h-3 w-4 shrink-0" viewBox="0 0 16 12"><path d="M6 2L10 6L6 10" stroke="#555" strokeWidth="2" fill="none" /></svg>
          </div>
        </main>
      </div>

      {/* Status bar */}
      <footer className="flex h-5 shrink-0 flex-col bg-[#f0f0f0]">
        <div className="flex h-[18px] items-center justify-between border-t border-[#d8d8d8] pt-[3px] pr-[30px] pl-[2px] text-xs leading-none">
          <span>垂直に移動: 2</span>
          <span>NUM</span>
        </div>
        <div className="flex h-[2px]">
          <div className="w-12 bg-[#1f4a40]" />
          <div className="w-[344px] bg-[#c4cac8]" />
          <div className="flex-1 bg-[#1f4a40]" />
        </div>
      </footer>
    </div>
  );
}
